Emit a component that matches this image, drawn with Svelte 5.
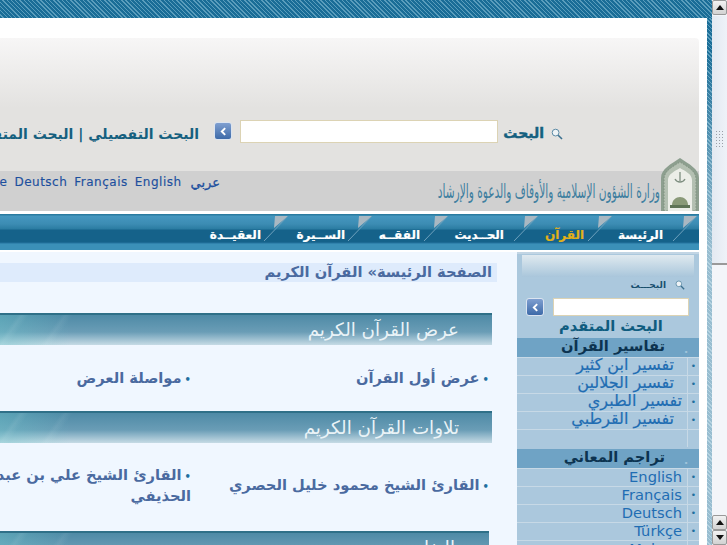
<script>
  const navItems = [
    { label: 'الرئيسة', width: 85, gap: 10 },
    { label: 'القرآن', width: 74, gap: 4, active: true },
    { label: 'الحــديث', width: 90, gap: 10 },
    { label: 'الفقــه', width: 76, gap: 4 },
    { label: 'الســيرة', width: 84, gap: 3 },
    { label: 'العقيــدة', width: 84, gap: 3 }
  ];
  const langs = ['عربي', 'English', 'Français', 'Deutsch', 'Türkçe'];
  const tafsir = [
    { t: 'تفسير ابن كثير', pad: 13 },
    { t: 'تفسير الجلالين', pad: 13 },
    { t: 'تفسير الطبري', pad: 5 },
    { t: 'تفسير القرطبي', pad: 13 },
    { t: '', pad: 0 }
  ];
  const translations = ['English', 'Français', 'Deutsch', 'Türkçe', 'Melayu'];
  const sections = [
    { title: 'عرض القرآن الكريم', items: ['عرض أول القرآن', 'مواصلة العرض'], rowClass: 'short' },
    { title: 'تلاوات القرآن الكريم', items: ['القارئ الشيخ محمود خليل الحصري', 'القارئ الشيخ علي بن عبد الرحمن الحذيفي'], rowClass: 'tall' },
    { title: 'التفاسير', items: [], rowClass: '', narrow: true }
  ];
</script>

{#snippet magnifier(size)}
  <svg class="mag" width={size} height={size} viewBox="0 0 12 12" aria-hidden="true">
    <circle cx="4.6" cy="4.6" r="3.4" fill="#eef3f6" stroke="#5d8ba6" stroke-width="1" />
    <path d="M7.2 7.2 11 11" stroke="#3a6f8e" stroke-width="1.6" />
  </svg>
{/snippet}

{#snippet goButton()}
  <div class="go">
    <svg width="9" height="9" viewBox="0 0 8 8" aria-hidden="true"><path d="M5.5 1 2.5 4l3 3" fill="none" stroke="#fff" stroke-width="1.7" /></svg>
  </div>
{/snippet}

<div class="page">
  <div class="main">
    <div class="top-stripe"></div>
    <div class="below">
      <div class="content">
        <header class="header">
          <div class="search-row">
            {@render magnifier(12)}
            <span class="search-label">البحث</span>
            <input class="search-input" type="text" />
            {@render goButton()}
            <span class="search-links">البحث التفصيلي | البحث المتقدم</span>
          </div>
          <div class="band">
            <div class="calligraphy">وزارة الشؤون الإسلامية والأوقاف والدعوة والإرشاد</div>
            <div class="langs">
              {#each langs as l, i}<span class:ar={i === 0}>{l}</span>{/each}
            </div>
          </div>
          <svg class="emblem" width="38" height="53" viewBox="0 0 38 53" aria-hidden="true">
            <path d="M0 53V20C0 11 10 6 19 0c9 6 19 11 19 20v33z" fill="#8d9f8f" />
            <path d="M3 53V21C3 13 11 9 19 4c8 5 16 9 16 17v32z" fill="#b4c0b2" stroke="#7f917f" stroke-dasharray="1.5 1.5" />
            <path d="M7 53V22c0-6 7-9 12-12 5 3 12 6 12 12v31z" fill="#eceee8" />
            <path d="M11 47c0-5 4-8 8-8s8 3 8 8z" fill="#8a9a78" />
            <rect x="9" y="47" width="20" height="3" fill="#5f7456" />
            <path d="M14 21c2 4 8 4 10 0M19 14v9" stroke="#7f8f80" stroke-width="1.3" fill="none" />
          </svg>
        </header>

        <nav class="nav">
          {#each navItems as item}
            <div class="nav-item" style:width="{item.width}px">
              <svg class="slash" width="24" height="25" viewBox="0 0 24 25" aria-hidden="true">
                <path d="M24 0H11L10 12z" fill="#a9b8c2" />
                <path d="M24 0 0 25" stroke="#6fa2bd" stroke-width="1" />
              </svg>
              <span class="nav-label" class:active={item.active} style:padding-right="{item.gap}px">{item.label}</span>
            </div>
          {/each}
        </nav>

        <div class="columns">
          <aside class="sidebar">
            <div class="side-top"></div>
            <div class="side-search-label">{@render magnifier(10)}<span>البحـــث</span></div>
            <div class="side-search">
              <input class="side-input" type="text" />
              {@render goButton()}
            </div>
            <div class="side-adv">البحث المتقدم</div>
            <div class="side-head"><i>▪</i><span>تفاسير القرآن</span></div>
            {#each tafsir as row}
              <div class="side-row"><b class="dot">{row.t ? '•' : ''}</b><span class="ar-link" style:padding-right="{row.pad}px">{row.t}</span></div>
            {/each}
            <div class="side-head second"><i>▪</i><span>تراجم المعاني</span></div>
            {#each translations as t}
              <div class="side-row"><b class="dot">•</b><span class="lat-link">{t}</span></div>
            {/each}
          </aside>

          <section class="body">
            <div class="crumb">الصفحة الرئيسة» القرآن الكريم</div>
            {#each sections as s}
              <h2 class="sec-head" class:narrow={s.narrow}>{s.title}</h2>
              {#if s.items.length}
                <div class="links {s.rowClass}">
                  {#each s.items as it}
                    <div class="link"><b class="bullet">•</b>{it}</div>
                  {/each}
                </div>
              {/if}
            {/each}
          </section>
        </div>
      </div>
      <div class="strip"></div>
    </div>
  </div>

  <div class="scrollbar">
    <div class="sb-btn"><span class="up"></span></div>
    <div class="sb-thumb"><div class="grip"></div></div>
    <div class="sb-btn end"><span class="up"></span></div>
    <div class="sb-btn"><span class="down"></span></div>
  </div>
</div>

<style>
  :global(body) { margin: 0; background: #fff; }
  .page {
    width: 727px; height: 545px; display: flex; overflow: hidden;
    font-family: "DejaVu Sans", "Noto Sans", sans-serif;
  }
  .main { width: 712px; flex: none; display: flex; flex-direction: column; }
  .top-stripe {
    height: 18px; flex: none;
    background: repeating-linear-gradient(45deg, #1a6d97 0 2px, #5a9dbc 2px 3px);
  }
  .below { flex: 1; display: flex; min-height: 0; }
  .strip {
    width: 5px; flex: none;
    background:
      linear-gradient(180deg, rgba(255,255,255,0) 0 30px, rgba(255,255,255,.55) 230px),
      repeating-linear-gradient(45deg, #1a6d97 0 2px, #5a9dbc 2px 3px);
  }
  .content {
    width: 707px; flex: none; background: #fff; overflow: hidden;
    direction: rtl; padding: 20px 8px 0 0; box-sizing: border-box;
  }

  .header {
    position: relative; height: 173px; width: 699px;
    display: flex; flex-direction: column;
    background: linear-gradient(180deg, #f7f6f6 0, #e3e2e0 70px);
    border-top-right-radius: 4px;
  }
  .search-row {
    height: 133px; box-sizing: border-box; padding: 82px 136px 0 0;
    display: flex; align-items: flex-start; white-space: nowrap;
  }
  .mag { flex: none; }
  .search-row > .mag { margin-top: 8px; }
  .search-label {
    font-size: 14px; font-weight: 700; color: #15607f; margin: 5px 7px 0 0; width: 39px;
    -webkit-text-stroke: .4px #15607f; line-height: 17px;
  }
  .search-input, .side-input {
    box-sizing: border-box; background: #fff; border: 1px solid #dcd3b4; padding: 0; margin: 0; outline: none; flex: none;
  }
  .search-input { width: 258px; height: 23px; margin-right: 7px; }
  .go {
    width: 18px; height: 18px; box-sizing: border-box; flex: none;
    border: 1px solid #dbe4f0; border-radius: 3px;
    background: linear-gradient(180deg, #7f9fd0, #3d6aa8);
    display: flex; align-items: center; justify-content: center;
  }
  .search-row .go { margin: 2px 8px 0 0; }
  .search-links { font-size: 14px; font-weight: 700; color: #15607f; margin: 6px 15px 0 0; line-height: 17px; }

  .band { height: 40px; background: #d0d0d0; display: flex; align-items: flex-start; }
  .calligraphy {
    width: 222px; margin: 9px 39px 0 0; flex: none; height: 23px;
    font-size: 20px; line-height: 22px; color: #3f7fa0; white-space: nowrap;
    transform: scaleX(.53); transform-origin: right center;
  }
  .langs {
    display: flex; gap: 6px; margin: 3px 218px 0 0; flex: none;
    font-size: 12px; line-height: 17px; color: #1d4f9e; white-space: nowrap; letter-spacing: .5px;
    -webkit-text-stroke: .15px #1d4f9e;
  }
  .langs span { margin-left: 1px; }
  .langs .ar { font-size: 13px; margin-left: 3px; letter-spacing: 0; -webkit-text-stroke: .3px #1d4f9e; }
  .emblem { position: absolute; right: 0; bottom: 0; }

  .nav {
    width: 699px; height: 36px; margin-top: 3px; display: flex; align-items: flex-start;
    background: linear-gradient(180deg, #2a7ba0 0, #2a7ba0 1px, #4597bf 2px, #3c8cb3 10px, #2b7ca2 15px, #15628a 16px, #15628a 28px, #2574a0 29px, #3b90b8 30px, #3b90b8 36px);
  }
  .nav-item { display: flex; flex: none; box-sizing: border-box; padding-top: 2px; }
  .nav-item:first-child { width: 87px !important; padding-right: 2px; }
  .slash { flex: none; }
  .nav-label {
    font-size: 12px; font-weight: 700; color: #fff; line-height: 17px; padding-top: 11px; white-space: nowrap;
    -webkit-text-stroke: .2px currentColor;
  }
  .nav-label.active { color: #e2b118; }

  .columns { width: 699px; margin-top: 2px; display: flex; align-items: flex-start; }
  .sidebar {
    width: 182px; height: 293px; flex: none; box-sizing: border-box; background: #abc8dd;
    padding: 1px 0 0; border-top: 2px solid #c2d5e4;
    overflow: hidden;
  }
  .side-top {
    height: 22px; margin: 0 5px;
    background: linear-gradient(180deg, #dfe9ef, #a9c6db);
  }
  .side-search-label {
    display: flex; align-items: center; gap: 9px; padding: 0 14px 0 0; height: 13px; margin-top: 1px;
    font-size: 9px; font-weight: 700; color: #174f6e;
  }
  .side-search { display: flex; align-items: center; padding: 0 10px 0 0; margin-top: 7px; height: 18px; }
  .side-input { width: 136px; height: 18px; margin-left: 9px; }
  .side-adv { font-size: 14.67px; font-weight: 700; color: #0f5c7f; text-align: center; height: 22px; line-height: 20px; padding-left: 6px; }
  .side-head {
    height: 19px; background: #6fa3c5; display: flex; align-items: flex-start; box-sizing: border-box;
    font-size: 14.67px; font-weight: 700; color: #0c3350; line-height: 15px; white-space: nowrap;
  }
  .side-head i { width: 26px; flex: none; font-size: 4px; color: #9fc3da; font-style: normal; text-align: center; margin: 6px 0 0 8px; }
  .side-head.second { margin-top: 2px; }
  .side-row {
    height: 18px; display: flex; align-items: flex-start; box-sizing: border-box;
    border-top: 1px solid #c7d9e6; white-space: nowrap;
  }
  .dot {
    width: 11px; flex: none; align-self: stretch; border-left: 1px solid #c7d9e6;
    font-size: 9px; line-height: 17px; color: #1f6f9f; text-align: center; font-weight: 400;
  }
  .ar-link { font-size: 16px; color: #1f6db3; line-height: 14px; -webkit-text-stroke: .2px #1f6db3; }
  .lat-link { font-size: 14.67px; color: #1f6db3; padding-right: 5px; line-height: 16px; direction: ltr; }

  .body { flex: 1; min-width: 0; height: 293px; background: #f0f7ff; overflow: hidden; padding-top: 11px; box-sizing: border-box; }
  .crumb {
    margin-right: 20px; height: 19px; background: #deebfc; padding-right: 5px;
    font-size: 14.67px; font-weight: 700; color: #4a6aa0; line-height: 18px; white-space: nowrap;
  }
  .sec-head {
    width: 492px; margin: 0 25px 0 0; height: 32px; box-sizing: border-box;
    padding: 0 33px 0 0;
    border-top: 2px solid #2f7088;
    font-size: 18.3px; font-weight: 400; color: #eaf3f7; line-height: 29px; white-space: nowrap;
    background:
      linear-gradient(125deg, transparent 14px, rgba(255,255,255,.07) 18px, transparent 24px),
      linear-gradient(125deg, transparent 50px, rgba(255,255,255,.06) 54px, transparent 60px),
      linear-gradient(90deg, rgba(110,200,205,.4), rgba(110,200,205,0) 70px),
      linear-gradient(180deg, #4e8aa6 0, #6a9db6 17px, #c6dbe5 30px);
  }
  .sec-head.narrow { width: 489px; margin-right: 28px; padding-right: 34px; }
  .crumb + .sec-head { margin-top: 31px; }
  .links {
    width: 492px; margin-right: 25px; display: grid; box-sizing: border-box;
    grid-template-columns: 298px 270px; align-items: center;
    font-size: 14.67px; font-weight: 700; color: #4a6aa0; line-height: 19px;
  }
  .links.short { height: 66px; }
  .links.tall { height: 88px; padding-bottom: 4px; }
  .link { padding-right: 3px; }
  .bullet { color: #1f6f9f; margin-left: 3px; font-size: 10px; }

  .scrollbar {
    width: 15px; flex: none; display: flex; flex-direction: column;
    background: #f3f5f9;
  }
  .sb-btn {
    height: 15px; box-sizing: border-box; flex: none; border: 1px solid #999; border-radius: 2px;
    background: linear-gradient(180deg, #f2f2f2, #d2d2d2);
    display: flex; align-items: center; justify-content: center;
  }
  .sb-btn.end { margin-top: auto; }
  .up, .down { width: 0; height: 0; border-left: 4px solid transparent; border-right: 4px solid transparent; }
  .up { border-bottom: 5px solid #111; }
  .down { border-top: 5px solid #111; }
  .sb-thumb {
    height: 249px; flex: none; box-sizing: border-box; margin-top: 1px;
    background: linear-gradient(90deg, #e3e9f1, #eef2f8);
    border-bottom: 2px solid #999;
    display: flex; justify-content: center; align-items: flex-start;
  }
  .grip {
    width: 10px; height: 18px; margin-top: 114px;
    background: radial-gradient(circle, #9aa0a8 0 .7px, transparent 1px) 0 0 / 3px 3px;
  }
</style>
